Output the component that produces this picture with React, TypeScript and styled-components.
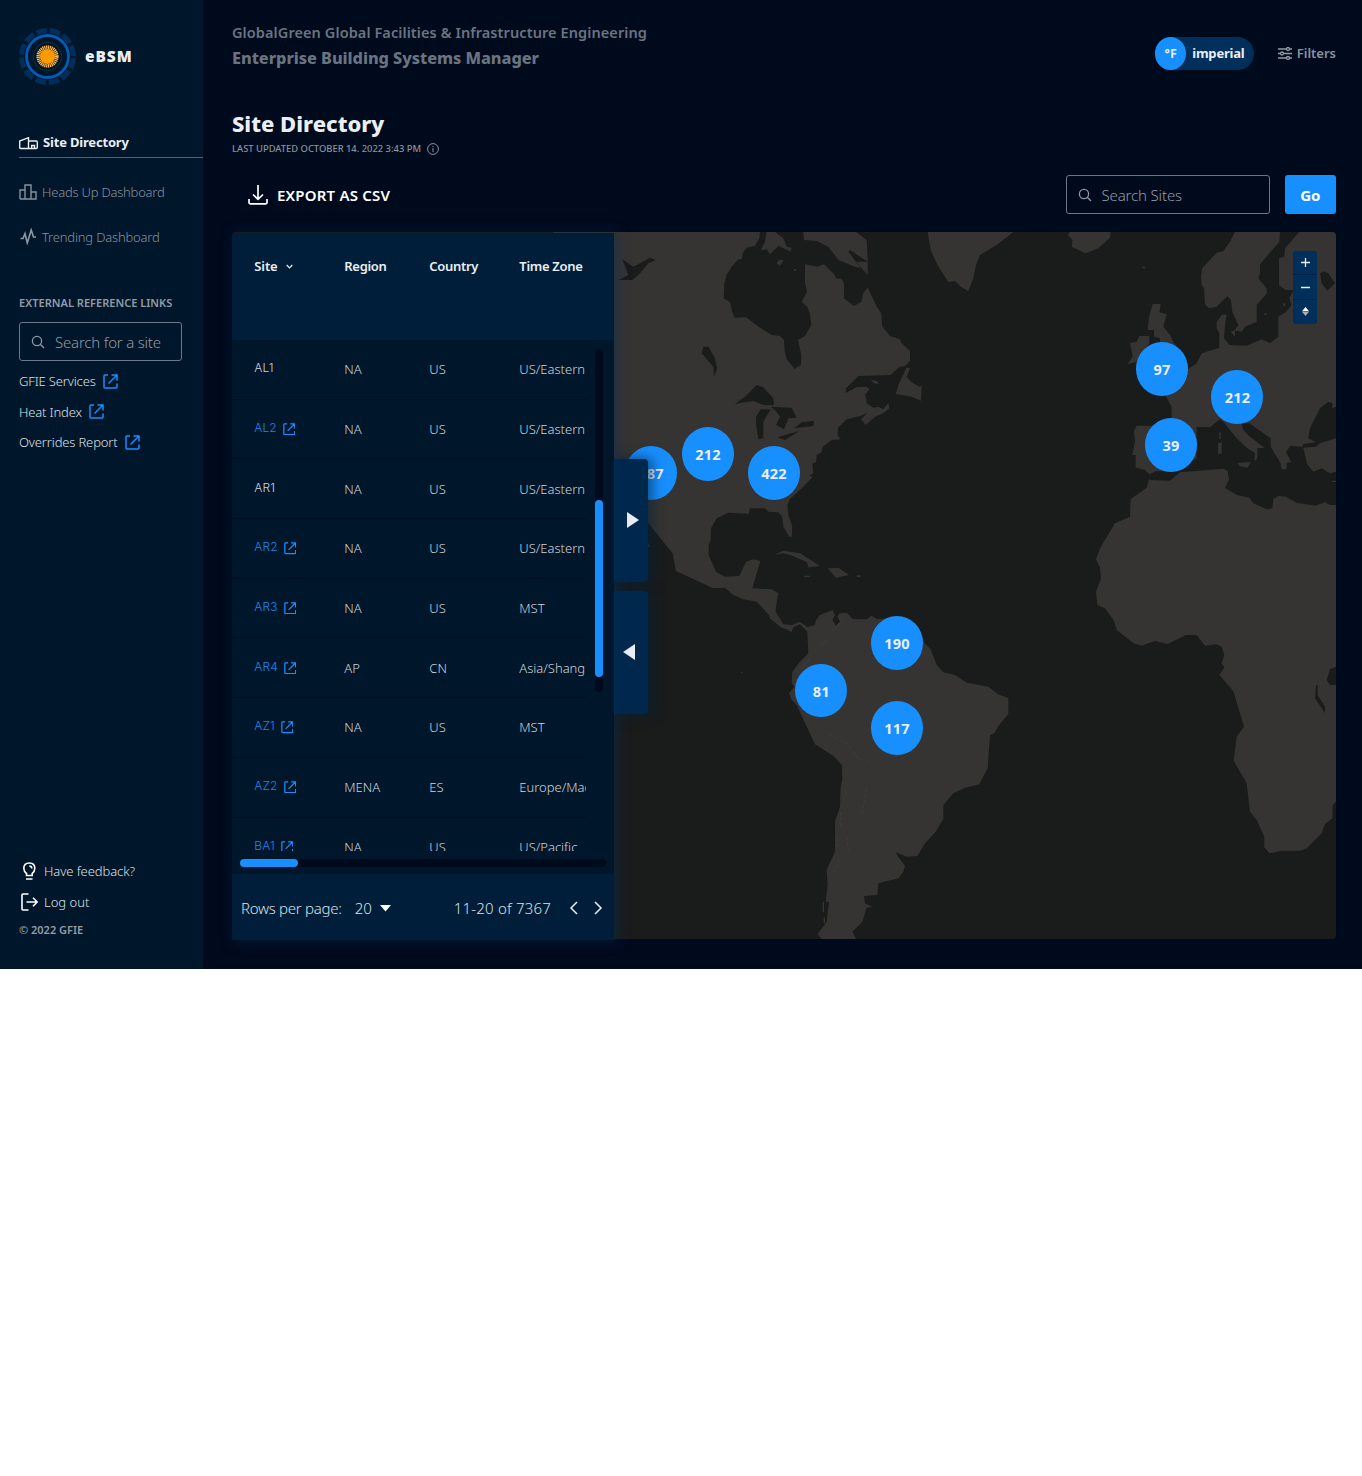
import React from "react";
import styled, { createGlobalStyle, css } from "styled-components";

const Global = createGlobalStyle`
  * { box-sizing: border-box; }
  body { margin: 0; background: #fff; font-family: "Noto Sans", "Open Sans", sans-serif; }
`;

const c = {
  bg: "#000a1d",
  side: "#00162b",
  head: "#001e39",
  tab: "#00284d",
  navy: "#002f5b",
  blue: "#188fff",
  text: "#ebeef4",
  soft: "#cfd5dc",
  muted: "#87929e",
  dim: "#6a7480",
};

const Txt = styled.span<{ $s: number; $w?: number; $c?: string; $ls?: number; $dy?: number }>`
  font-size: ${(p) => p.$s}px;
  font-weight: ${(p) => p.$w ?? 400};
  color: ${(p) => p.$c ?? c.text};
  letter-spacing: ${(p) => p.$ls ?? 0}px;
  line-height: 20px;
  white-space: nowrap;
  ${(p) => p.$dy && css`margin-top: ${p.$dy}px;`}
`;

const Shell = styled.div`
  display: flex;
  width: 1362px;
  height: 969px;
  background: ${c.bg};
`;
const Sidebar = styled.aside`
  display: flex;
  flex-direction: column;
  flex: none;
  width: 203.4px;
  padding: 28px 0 29px 19px;
  background: ${c.side};
`;
const Brand = styled.div`
  display: flex;
  align-items: center;
  gap: 9px;
  height: 57px;
  margin-bottom: 43px;
`;
const NavItem = styled.a<{ $active?: boolean }>`
  display: flex;
  align-items: center;
  gap: 5px;
  height: ${(p) => (p.$active ? 30 : 44.5)}px;
  margin-bottom: ${(p) => (p.$active ? 12 : 0)}px;
  border-bottom: ${(p) => (p.$active ? "1px solid #1071c6" : "0")};
`;
const RefLabel = styled.div`
  display: flex;
  height: 20px;
  margin: 34px 0 9px;
`;
const SearchBox = styled.div<{ $w: number }>`
  display: flex;
  align-items: center;
  gap: 10px;
  width: ${(p) => p.$w}px;
  height: 39px;
  padding-left: 11px;
  border: 1px solid #6c7789;
  border-radius: 3px;
`;
const LinkRow = styled.a`
  display: flex;
  align-items: center;
  gap: 7px;
  height: 30.5px;
`;
const FootRow = styled(LinkRow)`
  gap: 6px;
`;
const RefLinks = styled.div`
  padding-top: 5px;
`;
const SideFoot = styled.div`
  display: flex;
  flex-direction: column;
  margin-top: auto;
`;

const Main = styled.main`
  display: flex;
  flex-direction: column;
  flex: 1;
  padding: 22px 26px 0 28.6px;
`;
const TopBar = styled.header`
  display: flex;
  justify-content: space-between;
  height: 86px;
`;
const Stack = styled.div`
  display: flex;
  flex-direction: column;
  gap: 6px;
`;
const Tools = styled.div`
  display: flex;
  gap: 24px;
  height: 33px;
  margin-top: 15px;
  align-items: center;
`;
const UnitPill = styled.div`
  display: flex;
  align-items: center;
  gap: 6px;
  width: 98.5px;
  height: 33px;
  border-radius: 17px;
  background: ${c.navy};
`;
const UnitKnob = styled.div`
  display: flex;
  align-items: center;
  justify-content: center;
  width: 31px;
  height: 33px;
  border-radius: 50%;
  background: ${c.blue};
`;
const Filters = styled.div`
  display: flex;
  align-items: center;
  gap: 5px;
`;
const Heading = styled.h1`
  margin: 0;
  height: 31px;
  font-size: 22px;
  line-height: 30px;
  font-weight: 800;
  color: ${c.text};
`;
const Updated = styled.div`
  display: flex;
  align-items: center;
  gap: 6px;
  height: 20px;
  margin-bottom: 16px;
`;
const ActionRow = styled.div`
  display: flex;
  align-items: center;
  height: 39px;
  margin-bottom: 18px;
`;
const ExportButton = styled.div`
  display: flex;
  align-items: center;
  gap: 9px;
  margin: 0 auto 0 16px;
`;
const GoButton = styled.div`
  display: flex;
  align-items: center;
  justify-content: center;
  width: 51.5px;
  height: 39px;
  margin-left: 15px;
  border-radius: 3px;
  background: ${c.blue};
`;

const Stage = styled.section`
  position: relative;
  display: flex;
  height: 707px;
`;
const MapBox = styled.div`
  position: absolute;
  inset: 0;
  overflow: hidden;
  border-radius: 4px;
  background: #1a1c1b;
`;
const Cluster = styled.div<{ $x: number; $y: number }>`
  position: absolute;
  left: ${(p) => p.$x - 258}px;
  top: ${(p) => p.$y - 258.6}px;
  display: flex;
  align-items: center;
  justify-content: center;
  width: 52px;
  height: 53.5px;
  border-radius: 50%;
  background: ${c.blue};
`;
const ZoomCtl = styled.div`
  position: absolute;
  right: 19px;
  top: 18.5px;
  width: 24px;
  border-radius: 4px;
  overflow: hidden;
  display: grid;
  grid-template-rows: 23.7px 23.7px 23.7px;
  gap: 1px;
  background: #001f42;
`;
const ZoomBtn = styled.div`
  display: flex;
  align-items: center;
  justify-content: center;
  background: ${c.navy};
`;
const Panel = styled.div`
  position: relative;
  z-index: 2;
  display: flex;
  flex-direction: column;
  width: 382px;
  height: 707px;
  margin-top: 1px;
  border-radius: 4px 0 0 0;
  background: ${c.side};
  box-shadow: 3px 1px 13px 0 rgba(0, 48, 92, 0.5);
`;
const cols = css`
  display: grid;
  grid-template-columns: 90px 85px 90px 110px;
  padding-left: 22.3px;
`;
const THead = styled.div`
  ${cols}
  flex: none;
  height: 107px;
  padding-top: 23px;
  background: ${c.head};
  border-radius: 4px 0 0 0;
`;
const HeadCell = styled.div`
  display: flex;
  gap: 8px;
  height: 20px;
  align-items: center;
`;
const Body = styled.div`
  display: flex;
  height: 511px;
`;
const Rows = styled.div`
  width: 354px;
  overflow: hidden;
`;
const Row = styled.div`
  ${cols}
  align-items: center;
  height: 59.7px;
  border-bottom: 1px solid #000d22;
`;
const SiteCell = styled.div`
  display: flex;
  align-items: center;
  gap: 6px;
  height: 20px;
`;
const SiteCode = styled.span<{ $link: boolean }>`
  font-family: Inter, "Noto Sans", sans-serif;
  font-weight: 300;
  font-size: 12px;
  letter-spacing: 0.1px;
  line-height: 18px;
  margin-bottom: 2px;
  color: ${(p) => (p.$link ? "#1a86ec" : c.soft)};
`;
const VTrack = styled.div`
  width: 8px;
  height: 343px;
  margin: 9px 0 0 9px;
  padding-top: 151px;
  border-radius: 4px;
  background: #000a1d;
`;
const VThumb = styled.div`
  height: 177px;
  border-radius: 4px;
  background: ${c.blue};
`;
const HTrack = styled.div`
  width: 366px;
  height: 8px;
  margin: 8px 0 7px 8px;
  border-radius: 4px;
  background: #000a1d;
`;
const HThumb = styled.div`
  width: 58px;
  height: 8px;
  border-radius: 4px;
  background: ${c.blue};
`;
const TFoot = styled.div`
  display: flex;
  align-items: center;
  height: 66px;
  padding: 2px 11px 0 9px;
  background: ${c.head};
`;
const FootGroup = styled.div<{ $gap: number; $auto?: boolean }>`
  display: flex;
  align-items: center;
  gap: ${(p) => p.$gap}px;
  ${(p) => p.$auto && "margin-left: auto;"}
`;
const Tabs = styled.div`
  position: relative;
  z-index: 1;
  display: flex;
  flex-direction: column;
  gap: 9px;
  margin-top: 227px;
`;
const SideTab = styled.div<{ $pl: number }>`
  display: flex;
  align-items: center;
  width: 34px;
  height: 123px;
  padding: 0 0 1px ${(p) => p.$pl}px;
  border-radius: 0 4px 4px 0;
  background: ${c.tab};
  box-shadow: 3px 0 12px 2px rgba(0, 32, 62, 0.55);
`;

const Logo = () => (
  <svg width="57" height="57" viewBox="0 0 57 57" fill="none">
    <circle cx="28.5" cy="28.5" r="26" stroke="#002f5b" strokeWidth="5" strokeDasharray="10.4 3.2136" strokeDashoffset="-1.6" />
    <circle cx="28.5" cy="28.5" r="21" stroke="#005db5" strokeWidth="2.8" />
    <circle cx="28.5" cy="28.5" r="14.2" stroke="#202c37" strokeWidth="1" />
    <circle cx="28.5" cy="28.5" r="9.3" stroke="#ffb84f" strokeWidth="3.6" strokeDasharray="1.25 0.58" />
    <circle cx="28.5" cy="28.5" r="7.6" fill="#ff9900" />
  </svg>
);
const External = ({ size }: { size: number }) => (
  <svg width={size} height={size} viewBox="0 0 15 15" fill="none" stroke="#188fff" strokeWidth="1.5">
    <path d="M5 1H2Q1 1 1 2V13Q1 14 2 14H13Q14 14 14 13V9.5M5.5 9.5L13.5 1.5M8.5 1H14V6.5" />
  </svg>
);
const Magnifier = () => (
  <svg width="14" height="14" viewBox="0 0 14 14" fill="none" stroke="#8d97a5" strokeWidth="1.3">
    <circle cx="6" cy="6" r="4.6" />
    <path d="M9.3 9.3L13 13" />
  </svg>
);

const landWest = [
  "M-140 21H480L478 40L465 62L440 68L428 85L425 102L413 104L395 125L380 150L373 175L371 220L390 232L397 262L404 278L438 277L480 308L515 330L540 333L552 345L554 378L560 403L584 432L603 420L604 390L594 345L615 333L634 300L630 268L622 245L605 230L621 200L615 175V118L650 125L672 118L705 150L707 160L725 162L732 175V220L762 243L785 230L790 205L803 187L830 245L844 265L846 303L870 333L900 343L904 353L930 378V408L915 424L898 425L872 450L776 453L738 490L737 504L770 487L800 485L808 493L796 508L800 535L820 548L835 545L850 553L865 535L868 550L850 565L825 575L797 600L783 583L803 563L780 573L740 583L714 608L713 633L722 643L695 645L668 665L664 682L650 690L648 712L637 715L640 745L628 752L638 755L610 785L570 822L562 840L565 870L577 905L575 935L568 935L550 905L547 875L535 862L505 860L495 850H450L446 866L385 863L350 880L333 910L332 945L326 960V990L348 1040L375 1055L418 1053L438 1010L460 1003L481 1008L457 1090L515 1093L535 1105L527 1150L527 1160L550 1198L575 1200L600 1190L622 1206L645 1200L648 1185L660 1170L698 1155L705 1170L697 1185L708 1203L720 1190L712 1175L718 1165L740 1163L758 1182L800 1183L815 1172L830 1182L880 1180L970 1250L992 1273L1010 1320L1030 1342L1065 1350L1100 1373L1165 1385L1195 1408L1225 1420V1467L1195 1503L1183 1525L1170 1530L1163 1630L1138 1678L1095 1688L1060 1705L1030 1740V1783L1007 1820L975 1855L952 1893L920 1895L888 1882L892 1892L915 1922L910 1940L895 1960L835 1975L832 2010L792 2013L795 2035L817 2045L800 2048L787 2090L757 2120L770 2145H668L653 2128L680 2090L687 2030L677 2030L683 1980L680 1935L705 1880V1790L720 1745L722 1685L727 1665L726 1620L700 1592L645 1558L590 1440L575 1425L567 1405L583 1385L575 1375L577 1340L600 1310L625 1285L622 1220L600 1198L580 1207L575 1220L540 1205L510 1180L507 1170L470 1130L430 1123L400 1110L375 1088L340 1090L228 1038L218 985L145 895H-140Z",
  "M610 21H768L800 45L803 110L750 75L745 80L783 130L765 125L715 105L685 65L650 48L612 45Z",
  "M803 110V150L785 130L770 110Z",
  "M500 21H525L550 40L560 65L575 68L572 80L535 62L510 88L500 73L483 75L495 50Z",
  "M530 115L537 104L551 106L540 122Z",
  "M983 21H1240L1190 60L1140 90L1128 120L1120 160L1105 198L1083 185L1065 168L1045 172L1010 115L992 75Z",
  "M920 427L930 430L920 455L935 472L958 485L965 482L963 527L935 515L887 507L895 480Z",
  "M523 990L550 977L600 985L660 1023L625 1027L620 1010L570 990L550 985Z",
  "M683 1030L715 1028L747 1050L708 1058Z",
  "M613 1052H630V1056H613ZM770 1051H782V1056H770ZM812 465L830 468L838 478L822 475Z",
  "M668 2030H672V2062H668ZM671 2077H675V2095H671ZM140 945L151 965H140ZM582 132H587V138H582Z",
  "M423 1340H427V1344H423Z",
];
const lakesWest =
  "M310 365H325L343 395L352 430L342 455L340 425L305 385ZM67 103L100 125L150 98L168 105L145 115L120 145L98 165H55L85 150ZM404 537L435 515L470 480L490 487L520 520L522 540H490L460 528ZM468 575L482 553H512L490 590V640L475 643L469 605ZM512 545L575 548L590 578L565 580L552 613L528 600L540 575L525 555ZM532 637L600 617L555 645ZM583 610L605 592L642 587L640 603Z";
const landEast = [
  "M143 30L150 21H272L270 38L235 70L197 85L155 65L158 45Z",
  "M645 21H780L778 50L720 118V145L715 160L740 190V205L710 240V290L675 305L665 320L643 316L655 300L637 260L633 225L622 213L590 245L568 250L555 238L552 190L545 180L543 155L547 130L590 83L610 78L630 50Z",
  "M838 21H948V545L937 550V535L925 530L900 550L870 610L865 640L888 652L850 657L848 665L812 662L798 680L813 710L800 715V733H785L782 715L752 665V640L688 595H665L670 615L690 635L733 668L712 670L712 700L703 710L705 685L680 668L650 640L610 590L600 583L570 607L530 606V700L450 740L410 738L388 748L375 735L347 728V690H337L345 650L342 618L350 602H440L455 585V545L437 513L505 432L530 415L545 385L598 368V325L590 310V290L605 270L620 268L615 300L612 340L628 360L680 362L725 343L750 355L775 335V275L797 262L815 240L808 220L820 195H797L777 180V100L793 95L795 70Z",
  "M948 640L900 655L888 665L850 668L855 690L862 718L880 740L905 730L930 745L948 740Z",
  "M398 237H422L418 262L440 268L430 305L450 330L462 355L500 400L420 400V340L402 335V315L383 315L387 275Z",
  "M330 355L350 350L358 333H388V355L350 410L323 417L338 395Z",
  "M653 714L692 711L683 728L657 722ZM594 655L605 652V685L595 688ZM598 622H602V642H598ZM632 320L645 316V335ZM733 265H740V270H733ZM937 767H948V771H937ZM367 125H375V130H367ZM790 235H796V243H790Z",
  "M390 765L450 767L480 742L610 731L623 738L627 765L615 788L650 810L688 818L700 835L740 853L757 850L760 822L775 813L797 815L830 833L885 842L915 832L930 840H948V1730L938 1740L937 1780L915 1797L905 1825L860 1870L840 1877H785L748 1885L733 1867V1835L710 1785L690 1760L680 1675L641 1607L650 1535L672 1505L640 1398L598 1350L613 1327L605 1315L613 1290L605 1265L590 1258L555 1262L530 1230H498L443 1257L405 1248L365 1262L343 1256L290 1215L282 1187L255 1150L232 1140L228 1100L243 1060L240 1028L228 1003L240 970L285 895L330 875L332 822L380 788L388 760Z",
];
const lakesEast =
  "M900 145L912 139L925 145L945 175L922 197L905 175ZM948 1325L930 1332L920 1365L930 1380H948ZM888 1380H893V1410L915 1445V1465L885 1420Z";
const ridges =
  "M700 1215L728 1185M660 1260L692 1240M612 1320L630 1300M605 1330L618 1315M690 1530L740 1555L775 1600L815 1615M735 1700L745 1715M722 1760V1810M712 1840V1870M705 1945L715 1910M745 1880L740 1830M800 1690L785 1770";

const clusters: [number, number, string][] = [
  [651, 473, "187"], [708, 454, "212"], [774, 473, "422"], [1162, 369, "97"], [1237.5, 397, "212"],
  [1171, 445, "39"], [897, 643, "190"], [821.3, 690.5, "81"], [897, 728, "117"],
];

const WorldMap = () => (
  <MapBox>
    <svg width="1104" height="707" viewBox="232 232 1104 707" fill="#363432">
      <g transform="translate(600 225) scale(.33333)">
        {landWest.map((d) => <path key={d} d={d} />)}
        <path d={lakesWest} fill="#1a1c1b" />
        <path d={ridges} fill="none" stroke="#3d3b39" strokeWidth="4" strokeDasharray="10 7" />
      </g>
      <g transform="translate(1020 225) scale(.33333)">
        {landEast.map((d) => <path key={d} d={d} />)}
        <path d={lakesEast} fill="#1a1c1b" />
      </g>
    </svg>
    {clusters.map(([x, y, n]) => (
      <Cluster key={x + n} $x={x} $y={y}>
        <Txt $s={14.5} $w={700} $ls={0.25}>{n}</Txt>
      </Cluster>
    ))}
    <ZoomCtl>
      <ZoomBtn><svg width="9" height="9" stroke="#ebeef4" strokeWidth="1.3"><path d="M0 4.5H9M4.5 0V9" /></svg></ZoomBtn>
      <ZoomBtn><svg width="9" height="9" stroke="#ebeef4" strokeWidth="1.3"><path d="M0 4.5H9" /></svg></ZoomBtn>
      <ZoomBtn><svg width="7" height="9"><path d="M3.5 0L7 4.2H0Z" fill="#fff" /><path d="M0 4.8H7L3.5 9Z" fill="#9fb0c3" /></svg></ZoomBtn>
    </ZoomCtl>
  </MapBox>
);

const rows: [string, string, string, string, boolean][] = [
  ["AL1", "NA", "US", "US/Eastern", false],
  ["AL2", "NA", "US", "US/Eastern", true],
  ["AR1", "NA", "US", "US/Eastern", false],
  ["AR2", "NA", "US", "US/Eastern", true],
  ["AR3", "NA", "US", "MST", true],
  ["AR4", "AP", "CN", "Asia/Shanghai", true],
  ["AZ1", "NA", "US", "MST", true],
  ["AZ2", "MENA", "ES", "Europe/Madrid", true],
  ["BA1", "NA", "US", "US/Pacific", true],
];

export default function App() {
  return (
    <Shell>
      <Global />
      <Sidebar>
        <Brand>
          <Logo />
          <Txt $s={15.5} $w={900} $ls={0.9} $dy={-2}>eBSM</Txt>
        </Brand>
        <NavItem $active>
          <svg width="19" height="14" viewBox="0 0 19 14" fill="none" stroke="#ebeef4" strokeWidth="1.4">
            <path d="M9.5 12.5H1.7Q.7 12.5.7 11.5V5L9.5 1.7V12.5H17.3Q18.3 12.5 18.3 11.5V6Q18.3 5 17.3 5H9.5M12.7 12.5V9.5H15.5V12.5" />
          </svg>
          <Txt $s={13} $w={700} $ls={-0.18} $dy={-1}>Site Directory</Txt>
        </NavItem>
        <NavItem>
          <svg width="18" height="16" viewBox="0 0 18 16" fill="none" stroke={c.muted} strokeWidth="1.4">
            <path d="M1 15V6H6V15M6 6V1H12V15M12 8H17V15H1" />
          </svg>
          <Txt $s={13} $w={300} $c={c.muted} $ls={-0.22}>Heads Up Dashboard</Txt>
        </NavItem>
        <NavItem>
          <svg width="18" height="17" viewBox="0 0 18 17" fill="none" stroke="#8e98a3" strokeWidth="1.6">
            <path d="M1.5 10.5H4L6 5.5L8.3 15L12.2 2L14.5 9H17" />
          </svg>
          <Txt $s={13} $w={300} $c={c.muted} $ls={-0.18}>Trending Dashboard</Txt>
        </NavItem>
        <RefLabel><Txt $s={11} $w={600} $c="#929ca7" $ls={0.02}>EXTERNAL REFERENCE LINKS</Txt></RefLabel>
        <SearchBox $w={163}>
          <Magnifier />
          <Txt $s={15} $w={300} $c="#919ba6" $ls={-0.2}>Search for a site</Txt>
        </SearchBox>
        <RefLinks>
          {["GFIE Services", "Heat Index", "Overrides Report"].map((t) => (
            <LinkRow key={t}>
              <Txt $s={13} $w={300} $c="#dde1e6" $ls={-0.15}>{t}</Txt>
              <External size={15} />
            </LinkRow>
          ))}
        </RefLinks>
        <SideFoot>
          <FootRow>
            <svg width="19" height="18" viewBox="0 0 19 18" fill="none" stroke="#fff" strokeWidth="1.6">
              <path d="M7.5 13.5V11.5Q4.8 9.5 4.8 6.3Q4.8 1 10.3 1Q15.8 1 15.8 6.3Q15.8 9.5 13.2 11.5V13.5ZM7 17H13.5M10.3 4Q12.8 4 12.8 6.5" />
            </svg>
            <Txt $s={13} $w={300} $c="#dde1e6" $ls={-0.08}>Have feedback?</Txt>
          </FootRow>
          <FootRow>
            <svg width="19" height="18" viewBox="0 0 19 18" fill="none" stroke="#fff" strokeWidth="1.6">
              <path d="M9.5 1H4Q3 1 3 2V16Q3 17 4 17H9.5M7.5 9H18M14 4.8L18.2 9L14 13.2" />
            </svg>
            <Txt $s={13} $w={300} $c="#dde1e6">Log out</Txt>
          </FootRow>
          <Txt $s={11} $w={600} $c="#929ca7" $dy={3}>© 2022 GFIE</Txt>
        </SideFoot>
      </Sidebar>
      <Main>
        <TopBar>
          <Stack>
            <Txt $s={14.5} $w={600} $c={c.dim} $ls={0.09}>GlobalGreen Global Facilities &amp; Infrastructure Engineering</Txt>
            <Txt $s={16.3} $w={800} $c={c.dim} $ls={-0.05}>Enterprise Building Systems Manager</Txt>
          </Stack>
          <Tools>
            <UnitPill>
              <UnitKnob><Txt $s={12.5} $w={700}>°F</Txt></UnitKnob>
              <Txt $s={13} $w={700} $ls={-0.2} $dy={-1}>imperial</Txt>
            </UnitPill>
            <Filters>
              <svg width="14" height="13" viewBox="0 0 14 13" fill="none" stroke="#929ca7" strokeWidth="1.3">
                <path d="M0 2H8M12 2H14M0 6.5H2M6 6.5H14M0 11H8M12 11H14" />
                <circle cx="10" cy="2" r="1.5" /><circle cx="4" cy="6.5" r="1.5" /><circle cx="10" cy="11" r="1.5" />
              </svg>
              <Txt $s={13} $w={600} $c="#89939f" $dy={-1}>Filters</Txt>
            </Filters>
          </Tools>
        </TopBar>
        <Heading>Site Directory</Heading>
        <Updated>
          <Txt $s={9.4} $w={500} $c="#89939f">LAST UPDATED OCTOBER 14. 2022 3:43 PM</Txt>
          <svg width="12" height="12" viewBox="0 0 12 12" fill="none" stroke="#89939f">
            <circle cx="6" cy="6" r="5.4" /><path d="M6 5V9M6 3V4" />
          </svg>
        </Updated>
        <ActionRow>
          <ExportButton>
            <svg width="20" height="20" viewBox="0 0 20 20" fill="none" stroke="#fff" strokeWidth="1.7">
              <path d="M10 0V14M5 9.5L10 14.3L15 9.5M1 14V17.5Q1 18.8 2.2 18.8H17.8Q19 18.8 19 17.5V14" />
            </svg>
            <Txt $s={15} $w={600} $c="#fff" $ls={0.2}>EXPORT AS CSV</Txt>
          </ExportButton>
          <SearchBox $w={204}>
            <Magnifier />
            <Txt $s={15} $w={300} $c="#919ba6" $ls={-0.15}>Search Sites</Txt>
          </SearchBox>
          <GoButton><Txt $s={15} $w={700} $c="#fff">Go</Txt></GoButton>
        </ActionRow>
        <Stage>
          <WorldMap />
          <Panel>
            <THead>
              <HeadCell>
                <Txt $s={13} $w={600} $ls={-0.1}>Site</Txt>
                <svg width="7" height="5" fill="none" stroke="#ebeef4" strokeWidth="1.2"><path d="M.7 1L3.5 3.8L6.3 1" /></svg>
              </HeadCell>
              {["Region", "Country", "Time Zone"].map((t) => (
                <HeadCell key={t}><Txt $s={13} $w={600} $ls={-0.3}>{t}</Txt></HeadCell>
              ))}
            </THead>
            <Body>
              <Rows>
                {rows.map(([site, region, country, zone, link]) => (
                  <Row key={site}>
                    <SiteCell>
                      <SiteCode $link={link}>{site}</SiteCode>
                      {link && <External size={12.5} />}
                    </SiteCell>
                    {[region, country, zone].map((t, i) => (
                      <Txt key={i} $s={13} $w={300} $c={c.soft}>{t}</Txt>
                    ))}
                  </Row>
                ))}
              </Rows>
              <VTrack><VThumb /></VTrack>
            </Body>
            <HTrack><HThumb /></HTrack>
            <TFoot>
              <FootGroup $gap={13}>
                <Txt $s={15} $w={300} $c="#dde1e6" $ls={-0.28}>Rows per page:</Txt>
                <FootGroup $gap={8}>
                  <Txt $s={15} $w={300} $c="#dde1e6">20</Txt>
                  <svg width="11" height="7"><path d="M0 0H11L5.5 6.5Z" fill="#fff" /></svg>
                </FootGroup>
              </FootGroup>
              <FootGroup $gap={18} $auto>
                <Txt $s={15} $w={300} $c="#dde1e6" $ls={0.2}>11-20 of 7367</Txt>
                <svg width="34" height="14" fill="none" stroke="#ebeef4" strokeWidth="1.5">
                  <path d="M8 1L2 7L8 13M26 1L32 7L26 13" />
                </svg>
              </FootGroup>
            </TFoot>
          </Panel>
          <Tabs>
            <SideTab $pl={13}><svg width="12" height="16"><path d="M0 0L12 8L0 16Z" fill="#ebeef4" /></svg></SideTab>
            <SideTab $pl={9.5}><svg width="12" height="16"><path d="M12 0L0 8L12 16Z" fill="#ebeef4" /></svg></SideTab>
          </Tabs>
        </Stage>
      </Main>
    </Shell>
  );
}
